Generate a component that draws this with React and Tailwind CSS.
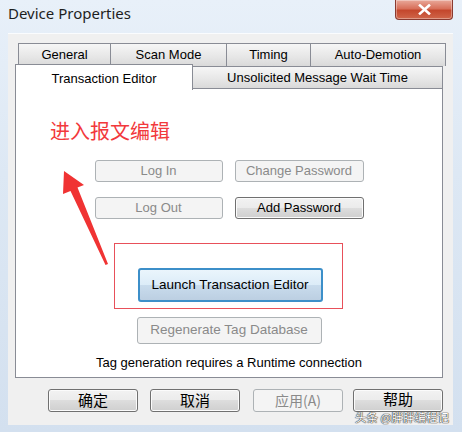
/* Device Properties dialog (Win7 style) */

const btnBase = "flex items-center justify-center rounded-[3px] border";
const btnNormal = `${btnBase} border-[#707070] text-black bg-[linear-gradient(#f2f2f2_0%,#ebebeb_50%,#dddddd_50%,#cfcfcf_100%)] shadow-[inset_0_0_0_1px_#fbfbfb]`;
const btnDisabled = `${btnBase} border-[#adb2b5] text-[#8a8a8a] bg-[#f4f4f4]`;

function Tab({ label, width }) {
  return (
    <div
      className="h-full flex items-center justify-center border-t border-l border-r border-[#898c95] bg-[linear-gradient(#f6f6f6,#e6e6e6_60%,#d9d9d9)] text-[13px] text-black -mr-px"
      style={{ width }}
    >
      {label}
    </div>
  );
}

export default function App() {
  return (
    <div className="relative w-[462px] h-[432px] overflow-hidden flex flex-col bg-[linear-gradient(180deg,#e8f0f9_0%,#dde8f4_40%,#d3e0ef_100%)] font-['Liberation_Sans','Noto_Sans_CJK_SC',sans-serif]">
      {/* Title bar */}
      <div className="h-[33px] flex items-start justify-between pl-[8px] pr-[9px] shrink-0">
        <span className="mt-[2px] text-[15px] text-[#1e1e1e] font-['Noto_Sans',sans-serif]">Device Properties</span>
        <div className="w-[58px] h-[20px] rounded-b-[4px] border border-t-0 border-[#8a3a30] bg-[linear-gradient(#e9a99a_0%,#d8705a_45%,#c4472d_55%,#d0664a_100%)] flex items-center justify-center shadow-[inset_0_0_0_1px_rgba(255,255,255,0.35)]">
          <svg width="13" height="11" viewBox="0 0 13 11">
            <path d="M2 1.5 L11 9.5 M11 1.5 L2 9.5" stroke="#fff" strokeWidth="2.6" strokeLinecap="square" />
          </svg>
        </div>
      </div>

      {/* Client area */}
      <div className="ml-[8px] mr-[9px] h-[392px] bg-[#f0f0f0] border-t border-[#fafcfe] flex flex-col pl-[7px] pr-[3px] pt-[9px]">
        {/* Tab rows */}
        <div className="h-[23px] flex ml-[3px]">
          <Tab label="General" width={93} />
          <Tab label="Scan Mode" width={117} />
          <Tab label="Timing" width={85} />
          <Tab label="Auto-Demotion" width={136} />
        </div>
        <div className="h-[22px] flex items-start">
          <div className="relative z-10 -mt-[2px] h-[26px] w-[178px] bg-white border-t border-l border-r border-[#898c95] flex items-start justify-center pt-[4px] text-[13px] text-black">
            Transaction Editor
          </div>
          <div className="h-[22px] w-[250px] flex items-center justify-center border-t border-r border-[#898c95] bg-[linear-gradient(#f6f6f6,#e6e6e6_60%,#d9d9d9)] text-[13px] text-black">
            Unsolicited Message Wait Time
          </div>
        </div>

        {/* Tab panel */}
        <div className="w-[428px] h-[290px] bg-white border border-[#898c95] flex flex-col items-center">
          <div className="self-start ml-[34px] mt-[28px] text-[20px] leading-[28px] text-[#f2393c] font-['Noto_Sans_CJK_SC',sans-serif]">
            进入报文编辑
          </div>
          <div className="mt-[15px] flex gap-[12px] text-[13px]">
            <div className={`${btnDisabled} w-[128px] h-[22px]`}>Log In</div>
            <div className={`${btnDisabled} w-[129px] h-[22px]`}>Change Password</div>
          </div>
          <div className="mt-[15px] flex gap-[12px] text-[13px]">
            <div className={`${btnDisabled} w-[128px] h-[22px]`}>Log Out</div>
            <div className={`${btnNormal} w-[129px] h-[22px]`}>Add Password</div>
          </div>
          <div className="mt-[24px] -ml-[2px] w-[229px] h-[66px] border border-[#e8505a] flex items-start pl-[23px] pt-[24px]">
            <div className="w-[185px] h-[34px] flex items-center justify-center rounded-[3px] border-2 border-[#3c8fc9] bg-[linear-gradient(#eaf5fc_0%,#dcecf8_50%,#c9dced_50%,#bccfe2_100%)] text-[13.5px] text-black">
              Launch Transaction Editor
            </div>
          </div>
          <div className={`${btnDisabled} mt-[8px] w-[185px] h-[27px] text-[13.5px]`}>Regenerate Tag Database</div>
          <div className="mt-[9px] text-[13px] text-black">Tag generation requires a Runtime connection</div>
        </div>

        {/* Dialog buttons */}
        <div className="mt-[11px] flex ml-[33px] text-[15px] font-['Noto_Sans_CJK_SC',sans-serif]">
          <div className={`${btnNormal} w-[90px] h-[23px] pb-[1px]`}>确定</div>
          <div className={`${btnNormal} ml-[12px] w-[90px] h-[23px] pb-[1px]`}>取消</div>
          <div className={`${btnDisabled} ml-[13px] w-[90px] h-[23px] pb-[1px] text-[14px]`}>应用(A)</div>
          <div className={`${btnNormal} ml-[10px] w-[90px] h-[23px] pb-[2px]`}>帮助</div>
        </div>
      </div>

      {/* Annotation arrow */}
      <svg className="absolute left-0 top-0 pointer-events-none" width="462" height="432">
        <polygon
          points="64,171 84,185 77.5,187.5 108,264 105.5,265 70.5,191 63,194"
          fill="#f03333"
        />
      </svg>

      {/* Watermark */}
      <div className="absolute left-[355px] top-[411px] text-[11.5px] leading-[12px] text-white font-['Noto_Sans_CJK_SC',sans-serif] [text-shadow:0_0_1px_#333,0_0_1px_#333,0_0_1px_#333]">
        头条 @胖胖编程记
      </div>
    </div>
  );
}
